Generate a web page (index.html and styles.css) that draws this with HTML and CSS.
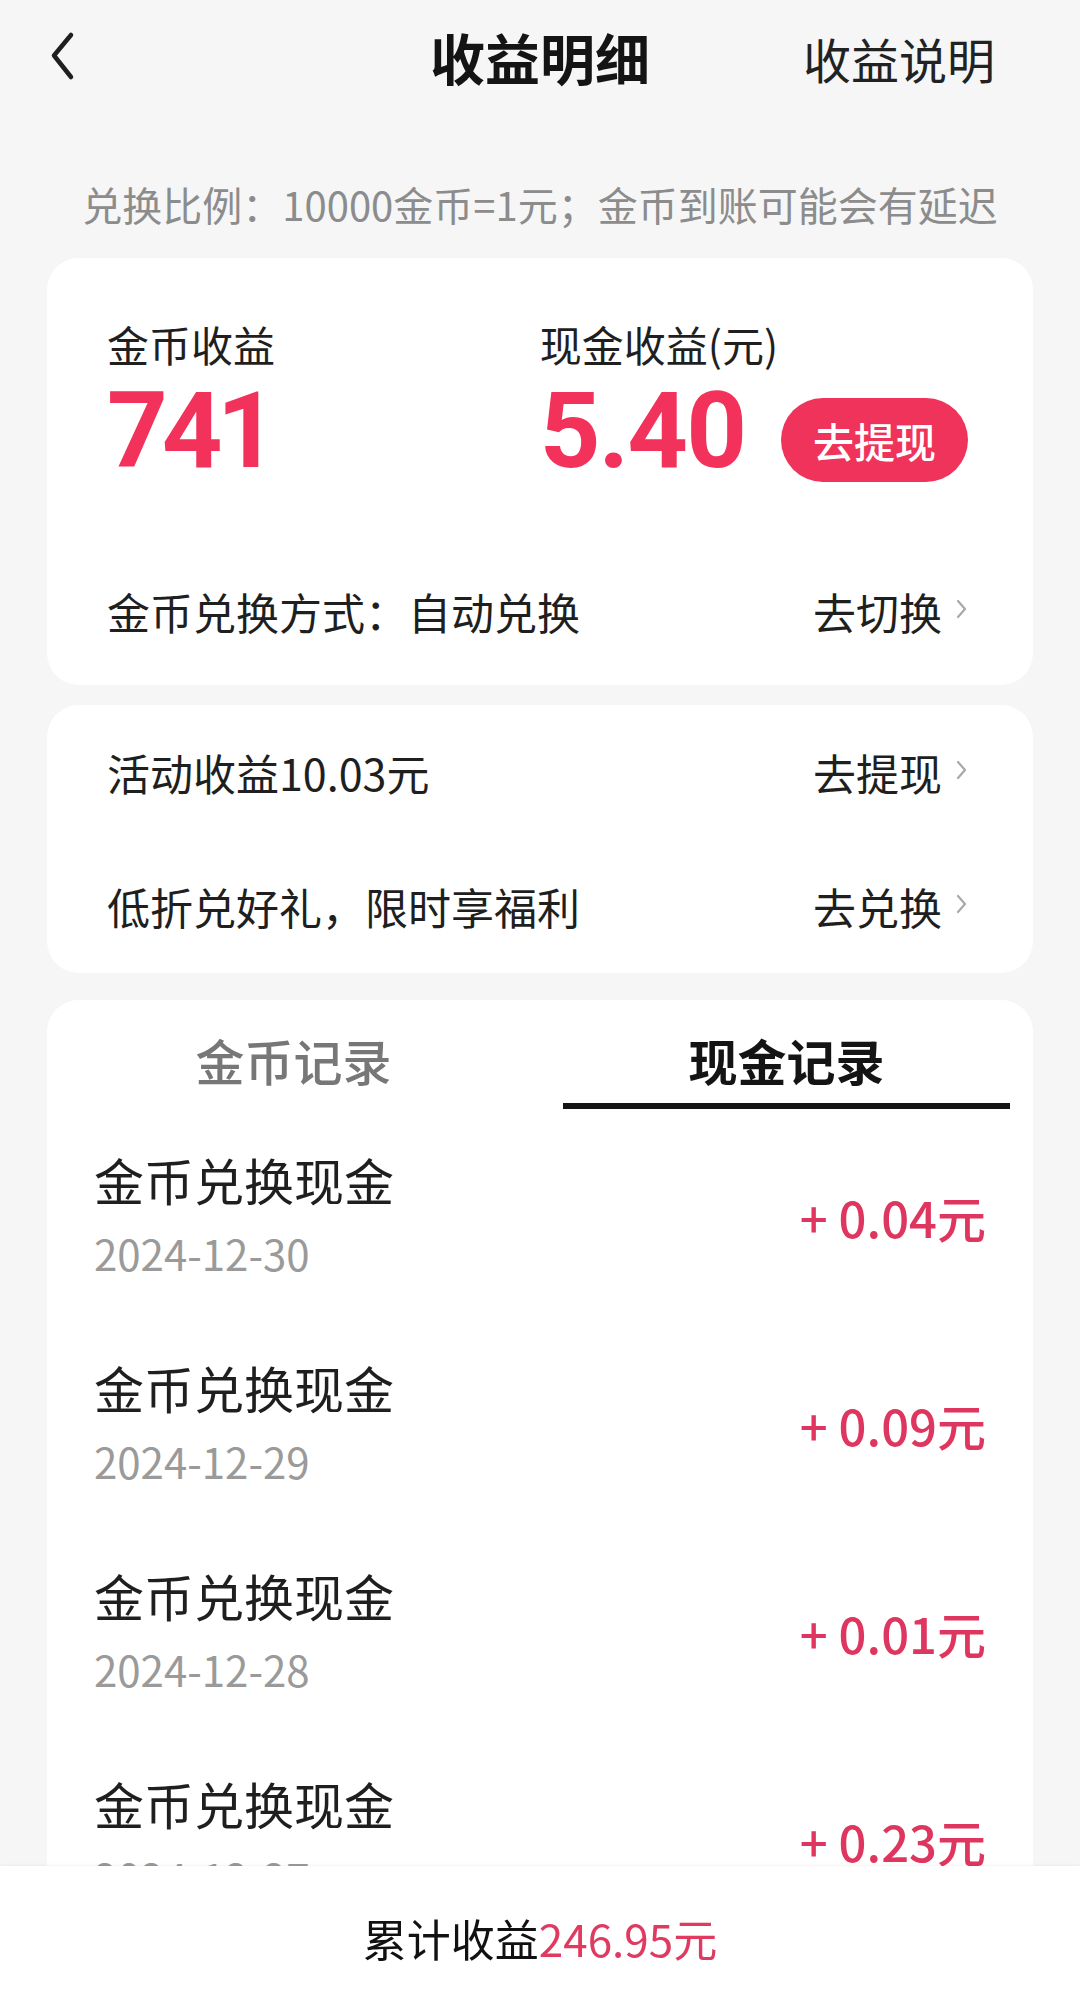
FILE: index.html
```html
<!DOCTYPE html>
<html lang="zh-CN">
<head>
    <meta charset="UTF-8">
    <meta name="viewport" content="width=device-width, initial-scale=1.0">
    <title>收益明细</title>
    <link rel="stylesheet" href="styles.css">
</head>
<body>
<div class="page">
    <div class="header">
        <div class="back">
            <svg width="28" height="52" viewBox="0 0 28 52">
                <polyline points="22,5 5,25.5 22,47" fill="none" stroke="#1f1f1f" stroke-width="4.5" stroke-linecap="round" stroke-linejoin="round"/>
            </svg>
        </div>
        <h1>收益明细</h1>
        <div class="header-link">收益说明</div>
    </div>

    <div class="notice">兑换比例：10000金币=1元；金币到账可能会有延迟</div>

    <!-- 收益汇总 -->
    <div class="card summary">
        <div class="totals">
            <div class="total">
                <div class="total-label">金币收益</div>
                <div class="total-value">741</div>
            </div>
            <div class="total">
                <div class="total-label">现金收益(元)</div>
                <div class="total-line">
                    <div class="total-value">5.40</div>
                    <div class="withdraw-btn">去提现</div>
                </div>
            </div>
        </div>
        <div class="link-row">
            <span>金币兑换方式：自动兑换</span>
            <span class="link">去切换<svg class="arrow" width="12" height="22" viewBox="0 0 12 22"><polyline points="2,3 9,11 2,19" fill="none" stroke="#a8a8a8" stroke-width="2.2" stroke-linecap="round" stroke-linejoin="round"/></svg></span>
        </div>
    </div>

    <div class="card">
        <div class="link-row short">
            <span>活动收益10.03元</span>
            <span class="link">去提现<svg class="arrow" width="12" height="22" viewBox="0 0 12 22"><polyline points="2,3 9,11 2,19" fill="none" stroke="#a8a8a8" stroke-width="2.2" stroke-linecap="round" stroke-linejoin="round"/></svg></span>
        </div>
        <div class="link-row short">
            <span>低折兑好礼，限时享福利</span>
            <span class="link">去兑换<svg class="arrow" width="12" height="22" viewBox="0 0 12 22"><polyline points="2,3 9,11 2,19" fill="none" stroke="#a8a8a8" stroke-width="2.2" stroke-linecap="round" stroke-linejoin="round"/></svg></span>
        </div>
    </div>

    <!-- 记录 -->
    <div class="card records">
        <div class="tabs">
            <div class="tab">金币记录</div>
            <div class="tab active">现金记录</div>
        </div>
        <div class="record">
            <div>
                <div class="record-title">金币兑换现金</div>
                <div class="record-date">2024-12-30</div>
            </div>
            <div class="record-amount">+ 0.04元</div>
        </div>
        <div class="record">
            <div>
                <div class="record-title">金币兑换现金</div>
                <div class="record-date">2024-12-29</div>
            </div>
            <div class="record-amount">+ 0.09元</div>
        </div>
        <div class="record">
            <div>
                <div class="record-title">金币兑换现金</div>
                <div class="record-date">2024-12-28</div>
            </div>
            <div class="record-amount">+ 0.01元</div>
        </div>
        <div class="record">
            <div>
                <div class="record-title">金币兑换现金</div>
                <div class="record-date">2024-12-27</div>
            </div>
            <div class="record-amount">+ 0.23元</div>
        </div>
    </div>
</div>

<div class="footer">
    <span>累计收益</span><span class="footer-sum">246.95元</span>
</div>
</body>
</html>
```

FILE: styles.css
```css
body {
    margin: 0;
    background-color: #f6f6f6;
    font-family: "Noto Sans CJK SC", "Noto Sans", sans-serif;
    color: #1f1f1f;
    height: 1991px;
    overflow: hidden;
}
.page {
    padding: 0 47px;
}
.header {
    height: 116px;
    display: grid;
    grid-template-columns: 1fr auto 1fr;
    align-items: center;
    margin: 0 -47px;
}
.back {
    padding-left: 49px;
    display: flex;
    align-items: center;
    margin-top: -4px;
}
.header h1 {
    margin: 0;
    font-size: 55px;
    font-weight: 700;
    color: #141414;
    line-height: 1;
    margin-top: -4px;
}
.header-link {
    justify-self: end;
    padding-right: 85px;
    font-size: 48px;
    line-height: 1;
    color: #222;
}
.notice {
    text-align: center;
    font-size: 40px;
    line-height: 52px;
    color: #8c8c8c;
    padding: 62px 0 28px;
}
.card {
    background: white;
    border-radius: 32px;
    margin-bottom: 20px;
}
.summary {
    padding: 0 65px 0 60px;
}
.totals {
    display: flex;
    padding-top: 58px;
    height: 282px;
    box-sizing: border-box;
}
.total:first-child {
    width: 434px;
}
.total-label {
    font-size: 42px;
    line-height: 56px;
}
.total-value {
    font-family: Roboto, "Liberation Sans", sans-serif;
    font-weight: 700;
    font-size: 106px;
    line-height: 110px;
    letter-spacing: -6px;
    color: #f2325a;
    margin-top: 4px;
}
.total-line {
    display: flex;
    align-items: center;
}
.total-line .total-value {
    letter-spacing: -2px;
}
.withdraw-btn {
    margin-left: 36px;
    margin-top: 22px;
    width: 187px;
    height: 84px;
    border-radius: 42px;
    background: #f0335a;
    color: white;
    font-size: 41px;
    font-weight: 500;
    display: flex;
    align-items: center;
    justify-content: center;
}
.link-row {
    display: flex;
    justify-content: space-between;
    align-items: center;
    font-size: 43px;
    height: 145px;
    padding-bottom: 4px;
    box-sizing: border-box;
}
.link-row.short {
    height: 134px;
    padding: 0 65px 0 60px;
}
.link {
    display: flex;
    align-items: center;
}
.arrow {
    margin-left: 14px;
    margin-top: -4px;
}
.records {
    margin-top: 27px;
    height: 1200px;
}
.tabs {
    display: flex;
    gap: 46px;
    padding: 0 23px;
}
.tab {
    flex: 1;
    text-align: center;
    font-size: 49px;
    font-weight: 500;
    line-height: 72px;
    padding: 24px 0 7px;
    color: #777;
    border-bottom: 6px solid transparent;
}
.tab.active {
    color: #141414;
    font-weight: 700;
    border-bottom-color: #141414;
}
.record {
    display: flex;
    justify-content: space-between;
    align-items: center;
    height: 208px;
    padding: 0 47px;
}
.record-title {
    font-size: 50px;
    line-height: 64px;
    padding-top: 2px;
}
.record-date {
    font-size: 42px;
    line-height: 56px;
    margin-top: 14px;
    color: #9a9a9a;
}
.record-amount {
    font-size: 49px;
    font-weight: 500;
    color: #de365f;
    margin-top: 6px;
}
.footer {
    position: fixed;
    left: 0;
    right: 0;
    bottom: 0;
    height: 125px;
    background: white;
    box-shadow: 0 -1px 3px rgba(0,0,0,0.05);
    display: flex;
    justify-content: center;
    align-items: center;
    padding-top: 18px;
    box-sizing: border-box;
    font-size: 44px;
    color: #111;
}
.footer-sum {
    color: #e03a60;
}
```
